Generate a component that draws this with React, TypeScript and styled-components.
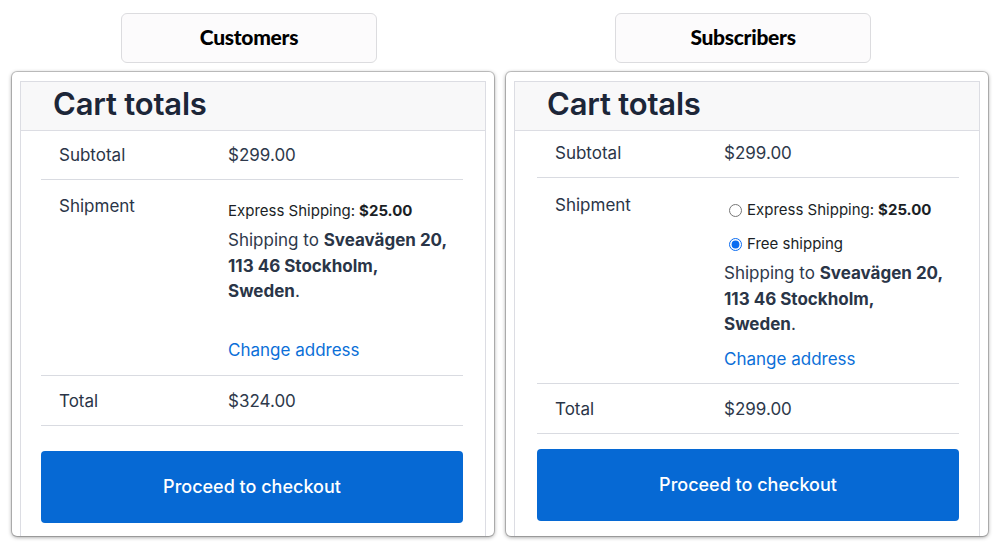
import * as React from "react";
import styled, {createGlobalStyle} from "styled-components";

const GlobalStyle = createGlobalStyle`
  html, body {
    margin: 0;
    padding: 0;
    background: #ffffff;
  }
  body {
    font-family: Inter, "Noto Sans", "Liberation Sans", sans-serif;
    color: #2a3547;
  }
`;

const Page = styled.div`
  display: flex;
  gap: 12px;
  padding: 13px 12px 0 12px;
  width: 1000px;
  height: 546px;
  box-sizing: border-box;
  overflow: hidden;
`;

const Column = styled.div`
  display: flex;
  flex-direction: column;
  width: 482px;
`;

const Tab = styled.div`
  display: flex;
  align-items: center;
  justify-content: center;
  width: 256px;
  height: 50px;
  margin: 0 0 9px 109px;
  padding-bottom: 4px;
  box-sizing: border-box;
  border: 1px solid #dcdcdf;
  border-radius: 6px;
  background: #fcfbfc;
  font-family: Lato, "Liberation Sans", sans-serif;
  font-weight: 900;
  font-size: 21px;
  letter-spacing: -0.3px;
  color: #000000;
`;

const Card = styled.div`
  display: flex;
  flex-direction: column;
  height: 464px;
  box-sizing: border-box;
  padding: 9px 8px 0 8px;
  border-radius: 5px;
  background: #ffffff;
  box-shadow: 0 0 0 1px rgba(0, 0, 0, 0.18), 0 1px 4px rgba(0, 0, 0, 0.45);
`;

const Panel = styled.div`
  flex: 1;
  border: 1px solid #dcdde3;
  border-bottom: none;
`;

const PanelHeader = styled.div`
  display: flex;
  align-items: center;
  height: 49px;
  padding: 0 0 5px 32px;
  box-sizing: border-box;
  background: #f8f8f9;
  border-bottom: 1px solid #dcdde3;
`;

const Title = styled.h2`
  margin: 0;
  font-size: 31px;
  font-weight: 600;
  letter-spacing: -0.2px;
  color: #1c2638;
`;

const Body = styled.div<{ $inset: number }>`
  padding: 0 ${p => 22 - p.$inset}px 0 ${p => 20 + p.$inset}px;
`;

const Row = styled.div<{ $top: number, $bottom: number }>`
  display: grid;
  grid-template-columns: 169px 220px;
  padding: ${p => p.$top}px 0 ${p => p.$bottom}px 18px;
  border-bottom: 1px solid #d9dbe1;
  font-size: 17px;
  line-height: 25px;
`;

const Value = styled.div`
  display: flex;
  flex-direction: column;
  color: #2e394b;
`;

const Methods = styled.ul`
  list-style: none;
  margin: 5px 0 5px 0;
  padding: 0;
  display: flex;
  flex-direction: column;
  gap: 10px;
`;

const Method = styled.li`
  display: flex;
  align-items: center;
  font-size: 15px;
  line-height: 24px;
  white-space: nowrap;
  color: #1b1f26;

  strong {
    margin-left: 4px;
    font-weight: 700;
  }
`;

const Radio = styled.input`
  width: 13px;
  height: 13px;
  margin: 0 5px 0 5px;
  accent-color: #0b6cf0;
`;

const Address = styled.p`
  margin: 0;
  line-height: 25.5px;

  strong {
    font-weight: 700;
    color: #2a3547;
  }
`;

const ChangeLink = styled.a<{ $gap: number }>`
  display: block;
  margin-top: ${p => p.$gap}px;
  color: #0b6fd8;
  text-decoration: none;
  line-height: 26px;
  cursor: pointer;
`;

const CheckoutButton = styled.button<{ $top: number }>`
  display: block;
  width: 100%;
  height: 72px;
  margin-top: ${p => p.$top}px;
  border: none;
  border-radius: 4px;
  background: #0669d4;
  color: #ffffff;
  font-family: Inter, "Noto Sans", "Liberation Sans", sans-serif;
  font-size: 18px;
  font-weight: 500;
  cursor: pointer;
`;

interface CartProps {
    audience: string
    total: string
    choosable: boolean
    inset: number
    subtotalTop: number
    shipmentTop: number
    linkGap: number
    buttonTop: number
}

const CartTotals = (props: CartProps) =>
    <Column>
        <Tab>{props.audience}</Tab>
        <Card>
            <Panel>
                <PanelHeader>
                    <Title>Cart totals</Title>
                </PanelHeader>
                <Body $inset={props.inset}>
                    <Row $top={props.subtotalTop} $bottom={11}>
                        <span>Subtotal</span>
                        <Value>$299.00</Value>
                    </Row>
                    <Row $top={props.shipmentTop} $bottom={26 - props.shipmentTop}>
                        <span>Shipment</span>
                        <Value>
                            <Methods>
                                <Method>
                                    {props.choosable && <Radio type="radio" name={props.audience} readOnly/>}
                                    Express Shipping:<strong>$25.00</strong>
                                </Method>
                                {props.choosable &&
                                    <Method>
                                        <Radio type="radio" name={props.audience} defaultChecked/>
                                        Free shipping
                                    </Method>}
                            </Methods>
                            <Address>
                                Shipping to <strong>Sveavägen 20, 113 46 Stockholm, Sweden</strong>.
                            </Address>
                            <ChangeLink $gap={props.linkGap}>Change address</ChangeLink>
                        </Value>
                    </Row>
                    <Row $top={13} $bottom={11}>
                        <span>Total</span>
                        <Value>{props.total}</Value>
                    </Row>
                    <CheckoutButton $top={props.buttonTop}>Proceed to checkout</CheckoutButton>
                </Body>
            </Panel>
        </Card>
    </Column>;

const App = () =>
    <>
        <GlobalStyle/>
        <Page>
            <CartTotals audience="Customers" total="$324.00" choosable={false} inset={0}
                        subtotalTop={12} shipmentTop={14} linkGap={32} buttonTop={25}/>
            <CartTotals audience="Subscribers" total="$299.00" choosable={true} inset={2}
                        subtotalTop={10} shipmentTop={15} linkGap={8} buttonTop={15}/>
        </Page>
    </>;

export default App;
